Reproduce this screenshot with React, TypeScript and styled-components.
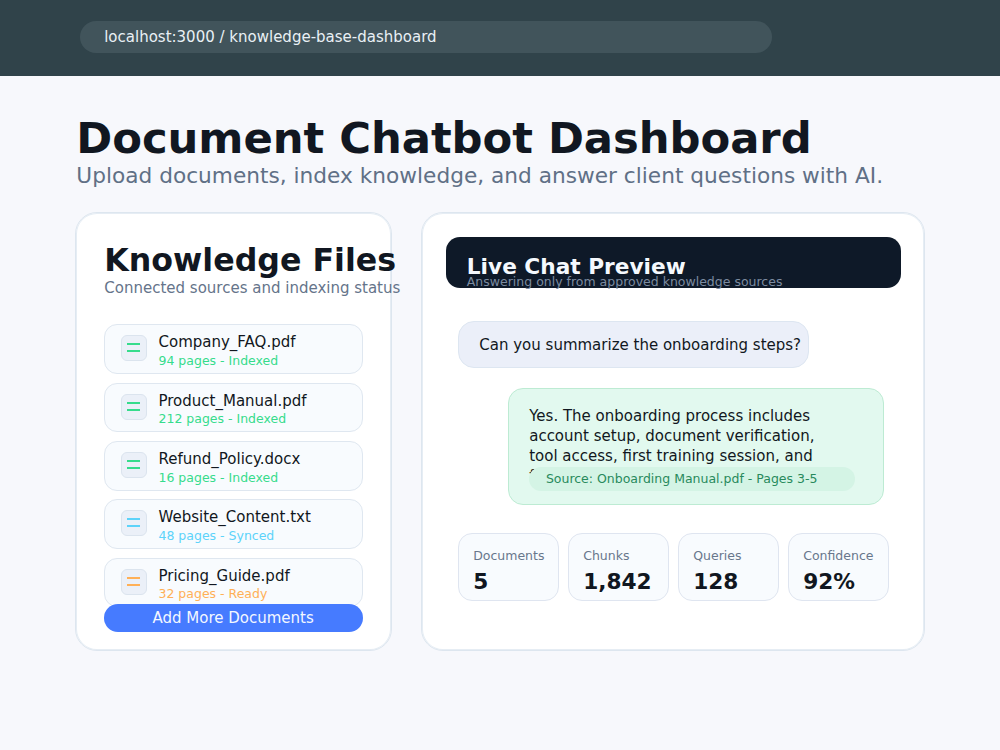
import React from "react";
import styled, { createGlobalStyle } from "styled-components";

const GlobalStyle = createGlobalStyle`
  * { box-sizing: border-box; }
  html, body { margin: 0; background: #f7f8fc; }
  body { font-family: "DejaVu Sans", Verdana, sans-serif; color: #111721; overflow: hidden; }
`;

const Page = styled.div`
  width: 1000px;
  height: 750px;
  background: #f7f8fc;
`;

const BrowserBar = styled.header`
  height: 75.8px;
  padding: 21px 0 0 80px;
  background: #30434a;
`;

const Address = styled.div`
  width: 691.7px;
  height: 31.7px;
  padding-left: 24.2px;
  border-radius: 16px;
  background: #41545b;
`;

type TextProps = { $size: number; $line: number; $color?: string; $bold?: boolean; $track?: number; $top?: number };

const Text = styled.div<TextProps>`
  font-size: ${(p) => p.$size}px;
  line-height: ${(p) => p.$line}px;
  height: ${(p) => p.$line}px;
  color: ${(p) => p.$color ?? "#111721"};
  font-weight: ${(p) => (p.$bold ? 700 : 400)};
  letter-spacing: ${(p) => p.$track ?? 0}px;
  margin: ${(p) => p.$top ?? 0}px 0 0;
  white-space: nowrap;
`;

const Main = styled.main`
  padding: 35.2px 75px 0;
`;

const Heading = styled.div`
  height: 101.2px;
  padding-left: 1.3px;
`;

const Columns = styled.div`
  display: grid;
  grid-template-columns: 317px 504.5px;
  grid-template-rows: 438.4px;
  column-gap: 28.8px;
`;

const Panel = styled.section<{ $pad: string }>`
  padding: ${(p) => p.$pad};
  border: 1px solid #dde6ef;
  border-radius: 22px;
  background: #fff;
  box-shadow: inset 0 0 0 1px #e6edf4;
`;

const FileList = styled.div`
  display: flex;
  flex-direction: column;
  gap: 8.5px;
  margin-top: 26px;
`;

const FileRow = styled.div`
  display: flex;
  width: 259.2px;
  height: 49.83px;
  padding: 10.2px 0 0 15.7px;
  border: 1px solid #dfe7f0;
  border-radius: 13px;
  background: #f8fbfe;
`;

const FileIcon = styled.div<{ $color: string }>`
  display: flex;
  flex-direction: column;
  align-items: center;
  gap: 5px;
  width: 26px;
  height: 26px;
  margin-right: 11.5px;
  padding-top: 7px;
  border: 1px solid #dbe4ee;
  border-radius: 6px;
  background: #ebf0f8;
  color: ${(p) => p.$color};
`;

const Line = styled.span`
  width: 13px;
  height: 2px;
  background: currentColor;
`;

const AddButton = styled.button`
  position: relative;
  display: block;
  width: 259.2px;
  height: 28.6px;
  margin: -3.7px 0 0;
  padding: 0 1.5px 0 0;
  border: 0;
  border-radius: 14.3px;
  background: #467bff;
  font-family: inherit;
  text-align: center;
`;

const ChatHeader = styled.div`
  width: 455.2px;
  height: 51.2px;
  padding: 16.3px 0 0 21px;
  border-radius: 14px;
  background: #0e1928;
`;

const Question = styled.div`
  width: 351px;
  height: 46.8px;
  margin: 32.7px 0 0 12.5px;
  padding: 13.1px 0 0 20px;
  border: 1px solid #dde6f1;
  border-radius: 16px;
  background: #ebeff9;
`;

const Answer = styled.div`
  width: 376px;
  height: 117.4px;
  margin: 19.8px 0 0 62.4px;
  padding: 17.6px 0 0 20px;
  border: 1px solid #bdebd3;
  border-radius: 15px;
  background: #e2f9ef;
`;

const Source = styled.div`
  position: relative;
  width: 326px;
  height: 24px;
  margin-top: -19.4px;
  padding-left: 16.7px;
  border-radius: 12px;
  background: #d4f4e5;
`;

const Stats = styled.div`
  display: grid;
  grid-template-columns: repeat(4, 101px);
  gap: 9px;
  margin: 28px 0 0 12.4px;
`;

const Stat = styled.div`
  height: 68px;
  padding: 13px 0 0 14px;
  border: 1px solid #dfe5f0;
  border-radius: 14px;
  background: #f8fbfe;
`;

const files = [
  { name: "Company_FAQ.pdf", status: "94 pages - Indexed", color: "#36dc8c" },
  { name: "Product_Manual.pdf", status: "212 pages - Indexed", color: "#36dc8c" },
  { name: "Refund_Policy.docx", status: "16 pages - Indexed", color: "#36dc8c" },
  { name: "Website_Content.txt", status: "48 pages - Synced", color: "#5dd3fa" },
  { name: "Pricing_Guide.pdf", status: "32 pages - Ready", color: "#ffb057" },
];

const stats = [
  ["Documents", "5"],
  ["Chunks", "1,842"],
  ["Queries", "128"],
  ["Confidence", "92%"],
];

const answer = [
  "Yes. The onboarding process includes",
  "account setup, document verification,",
  "tool access, first training session, and",
  "f",
];

export default function App() {
  return (
    <Page>
      <GlobalStyle />
      <BrowserBar>
        <Address>
          <Text $size={15} $line={33} $color="#e9f0f5">localhost:3000 / knowledge-base-dashboard</Text>
        </Address>
      </BrowserBar>
      <Main>
        <Heading>
          <Text as="h1" $size={43.33} $line={54} $bold $track={-0.06}>Document Chatbot Dashboard</Text>
          <Text $size={21.67} $line={26} $top={-1.7} $track={0.01} $color="#607086">
            Upload documents, index knowledge, and answer client questions with AI.
          </Text>
        </Heading>
        <Columns>
          <Panel $pad="27.3px 0 0 28.3px">
            <Text as="h2" $size={31.67} $line={40} $bold>Knowledge Files</Text>
            <Text $size={15} $line={20} $top={-2.2} $color="#65748a">Connected sources and indexing status</Text>
            <FileList>
              {files.map((f) => (
                <FileRow key={f.name}>
                  <FileIcon $color={f.color}>
                    <Line />
                    <Line />
                  </FileIcon>
                  <div>
                    <Text $size={15} $line={20} $top={-3.2}>{f.name}</Text>
                    <Text $size={12.5} $line={16} $top={0.8} $color={f.color}>{f.status}</Text>
                  </div>
                </FileRow>
              ))}
            </FileList>
            <AddButton>
              <Text $size={15} $line={28} $color="#f3f7ff">Add More Documents</Text>
            </AddButton>
          </Panel>
          <Panel $pad="24px 0 0 24px">
            <ChatHeader>
              <Text as="h2" $size={21.67} $line={28} $bold $color="#f5f9fe">Live Chat Preview</Text>
              <Text $size={12.5} $line={16} $top={-7} $color="#7c8ba0">
                Answering only from approved knowledge sources
              </Text>
            </ChatHeader>
            <Question>
              <Text $size={15} $line={20}>Can you summarize the onboarding steps?</Text>
            </Question>
            <Answer>
              {answer.map((line) => (
                <Text key={line} $size={15} $line={20}>{line}</Text>
              ))}
              <Source>
                <Text $size={12.5} $line={24} $color="#288a5c">Source: Onboarding Manual.pdf - Pages 3-5</Text>
              </Source>
            </Answer>
            <Stats>
              {stats.map(([label, value]) => (
                <Stat key={label}>
                  <Text $size={12.5} $line={18} $color="#68778c">{label}</Text>
                  <Text $size={21.67} $line={28} $top={2.7} $bold>{value}</Text>
                </Stat>
              ))}
            </Stats>
          </Panel>
        </Columns>
      </Main>
    </Page>
  );
}
